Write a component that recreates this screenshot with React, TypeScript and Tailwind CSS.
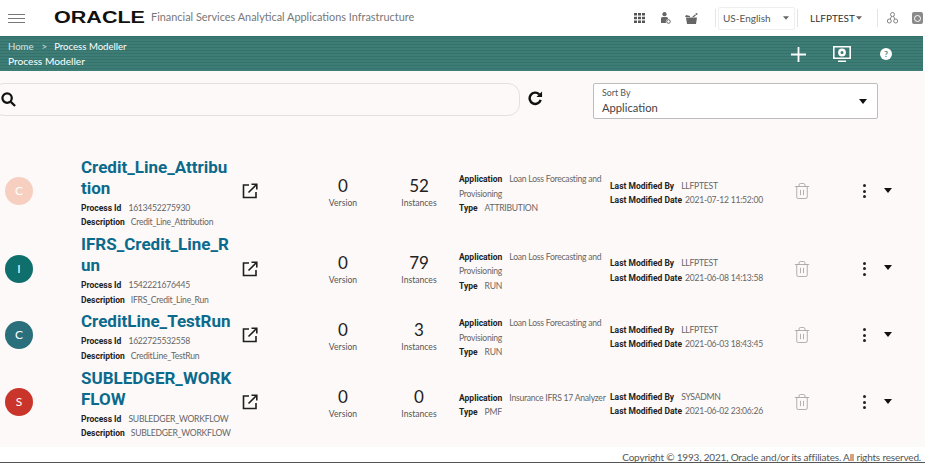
import React from "react";
import { Trash2 } from "lucide-react";

const Caret = ({ className }: { className: string }) => (
  <svg viewBox="0 0 10 6" className={className}>
    <path d="M0 0h10L5 6z" fill="currentColor" />
  </svg>
);

const OpenIcon = () => (
  <svg viewBox="0 0 16 16" className="w-[16px] h-[16px] text-[#1f1f1f]" fill="none" stroke="currentColor" strokeWidth="1.6">
    <path d="M7 2H1.5v12.5H14V9" />
    <path d="M6.5 9.5 14.5 1.5M9.5 1.2h5.3v5.3" />
  </svg>
);

const rows = [
  { letter: "C", color: "bg-[#f7cfc0]", title: "Credit_Line_Attribution", id: "1613452275930", desc: "Credit_Line_Attribution", version: 0, instances: 52, app: "Loan Loss Forecasting and Provisioning", type: "ATTRIBUTION", by: "LLFPTEST", date: "2021-07-12 11:52:00", h: "h-[78px]" },
  { letter: "I", color: "bg-[#0f6f6c]", title: "IFRS_Credit_Line_Run", id: "1542221676445", desc: "IFRS_Credit_Line_Run", version: 0, instances: 79, app: "Loan Loss Forecasting and Provisioning", type: "RUN", by: "LLFPTEST", date: "2021-06-08 14:13:58", h: "h-[77px]" },
  { letter: "C", color: "bg-[#2a6f7c]", title: "CreditLine_TestRun", id: "1622725532558", desc: "CreditLine_TestRun", version: 0, instances: 3, app: "Loan Loss Forecasting and Provisioning", type: "RUN", by: "LLFPTEST", date: "2021-06-03 18:43:45", h: "h-[56px]" },
  { letter: "S", color: "bg-[#c9352a]", title: "SUBLEDGER_WORKFLOW", id: "SUBLEDGER_WORKFLOW", desc: "SUBLEDGER_WORKFLOW", version: 0, instances: 0, app: "Insurance IFRS 17 Analyzer", type: "PMF", by: "SYSADMN", date: "2021-06-02 23:06:26", h: "h-[78px]" },
];

const Label = ({ children, gap }: { children: React.ReactNode; gap: string }) => (
  <b className={`font-['Roboto',sans-serif] tracking-normal text-[8.5px] text-[#222] ${gap}`}>{children}</b>
);

const Row = ({ r }: { r: (typeof rows)[number] }) => (
  <div className={`flex items-center ${r.h}`}>
    <div className={`ml-[5px] mb-[4px] w-[28px] h-[28px] rounded-full ${r.color} text-white text-[12px] flex items-center justify-center shrink-0`}>
      {r.letter}
    </div>
    <div className="ml-[48px] w-[151px] shrink-0">
      <div className="font-['Roboto',sans-serif] text-[17px] leading-[21px] font-bold text-[#0b6a8c] break-all">{r.title}</div>
      <div className="mt-[2px] text-[8.6px] tracking-[-0.25px] leading-[14.4px] text-[#666] whitespace-nowrap">
        <div><Label gap="mr-[7px]">Process Id</Label>{r.id}</div>
        <div><Label gap="mr-[6px]">Description</Label>{r.desc}</div>
      </div>
    </div>
    <div className="ml-[10px] mb-[4px] w-[16px] shrink-0"><OpenIcon /></div>
    <div className="ml-[50px] w-[70px] shrink-0 text-center">
      <div className="text-[17px] leading-[20px] text-[#222]">{r.version}</div>
      <div className="text-[8.6px] leading-[15px] text-[#555]">Version</div>
    </div>
    <div className="ml-[6px] w-[70px] shrink-0 text-center">
      <div className="text-[17px] leading-[20px] text-[#222]">{r.instances}</div>
      <div className="text-[8.6px] leading-[15px] text-[#555]">Instances</div>
    </div>
    <div className="ml-[5px] mt-[2px] w-[151px] shrink-0 text-[8.6px] tracking-[-0.25px] leading-[14.4px] text-[#666]">
      <div><Label gap="mr-[7px]">Application</Label>{r.app}</div>
      <div><Label gap="mr-[7px]">Type</Label>{r.type}</div>
    </div>
    <div className="w-[183px] shrink-0 text-[8.6px] tracking-[-0.25px] leading-[14.4px] text-[#666]">
      <div><Label gap="mr-[7px]">Last Modified By</Label>{r.by}</div>
      <div><Label gap="mr-[3px]">Last Modified Date</Label>{r.date}</div>
    </div>
    <Trash2 className="w-[18px] h-[18px] mb-[4px] text-[#a0a0a0] shrink-0" strokeWidth={1.1} />
    <div className="ml-[52px] mb-[4px] flex flex-col gap-[2.5px] shrink-0">
      <span className="w-[3px] h-[3px] rounded-full bg-[#222]" />
      <span className="w-[3px] h-[3px] rounded-full bg-[#222]" />
      <span className="w-[3px] h-[3px] rounded-full bg-[#222]" />
    </div>
    <Caret className="ml-[18px] mb-[6px] w-[8px] h-[5px] text-[#111] shrink-0" />
  </div>
);

export default function App() {
  return (
    <div className="w-[925px] h-[463px] overflow-hidden bg-white flex flex-col font-['Lato',sans-serif]">
      {/* top bar */}
      <div className="h-[36px] flex items-center shrink-0">
        <div className="ml-[8px] w-[17px] flex flex-col gap-[3px]">
          <span className="h-[1px] bg-[#777]" />
          <span className="h-[1px] bg-[#777]" />
          <span className="h-[1px] bg-[#777]" />
        </div>
        <svg viewBox="0 0 92 16" className="ml-[29px] mb-[3px] w-[92px] h-[16px] shrink-0">
          <text x="0" y="13.5" textLength="91" lengthAdjust="spacingAndGlyphs" fontFamily="Liberation Sans, sans-serif" fontWeight="700" fontSize="16" fill="#111">ORACLE</text>
        </svg>
        <span className="ml-[5px] mb-[1px] w-[268px] text-[10.9px] text-[#777] whitespace-nowrap">Financial Services Analytical Applications Infrastructure</span>
        <svg viewBox="0 0 11 10" className="ml-[215px] mb-[1px] w-[11px] h-[10px] text-[#555] shrink-0" fill="currentColor">
          <path d="M0 0h3v2.5H0zM4 0h3v2.5H4zM8 0h3v2.5H8zM0 3.7h3v2.5H0zM4 3.7h3v2.5H4zM8 3.7h3v2.5H8zM0 7.4h3V10H0zM4 7.4h3V10H4zM8 7.4h3V10H8z" />
        </svg>
        <svg viewBox="0 0 11 12" className="ml-[15px] w-[11px] h-[12px] text-[#666] shrink-0" fill="currentColor">
          <circle cx="4.5" cy="2.2" r="2.1" />
          <path d="M1 11V6.5C1 5.3 2 5 4.5 5S8 5.3 8 6.5V7a3 3 0 0 0-2 4z" />
          <circle cx="8.5" cy="9.5" r="1.8" fill="none" stroke="currentColor" />
        </svg>
        <svg viewBox="0 0 13 11" className="ml-[14px] w-[13px] h-[11px] text-[#666] shrink-0" fill="currentColor">
          <path d="M1 4.5h11L11 11H2zM0 4h5v-1L1 2zM7 4l3-2.5 1 .8L9 4z" />
          <circle cx="11.5" cy="1" r="1" />
        </svg>
        <span className="ml-[17px] w-[1px] h-[18px] bg-[#e4e4e4] shrink-0" />
        <div className="ml-[2px] w-[77px] h-[23px] border border-[#f0eeee] rounded-[2px] flex items-center pl-[4px] shrink-0">
          <span className="text-[10px] text-[#555] whitespace-nowrap">US-English</span>
          <Caret className="ml-auto mr-[5px] w-[6px] h-[4px] text-[#666]" />
        </div>
        <span className="ml-[2px] w-[1px] h-[18px] bg-[#e4e4e4] shrink-0" />
        <span className="ml-[12px] w-[40px] text-[10px] text-[#333] whitespace-nowrap">LLFPTEST</span>
        <Caret className="ml-[6px] w-[6px] h-[4px] text-[#666] shrink-0" />
        <span className="ml-[15px] w-[1px] h-[18px] bg-[#e4e4e4] shrink-0" />
        <svg viewBox="0 0 11 12" className="ml-[9px] w-[11px] h-[12px] text-[#777] shrink-0" fill="none" stroke="currentColor" strokeWidth="0.9">
          <circle cx="5.5" cy="2.5" r="2" />
          <circle cx="2.3" cy="9" r="2" />
          <circle cx="8.7" cy="9" r="2" />
          <path d="M4.5 4.3 3.2 7.2M6.5 4.3l1.3 2.9" />
        </svg>
        <div className="ml-[14px] w-[11px] h-[12px] bg-[#8a8a8a] rounded-[2px] flex items-center justify-center shrink-0">
          <span className="w-[7px] h-[7px] rounded-full border border-white" />
        </div>
      </div>

      {/* teal band */}
      <div className="h-[35px] mr-[2px] shrink-0 flex items-center bg-[#3b7a74] bg-[repeating-linear-gradient(0deg,#3d7d76_0px,#3d7d76_2px,#35726c_2px,#35726c_3px)] border-t border-[#2f6d67]">
        <div className="ml-[8px] text-[9.6px] leading-[14px] text-white">
          <div className="flex items-center">
            <span className="text-[#d5e4e2]">Home</span>
            <span className="ml-[8px] mr-[7px] text-[#d5e4e2]">&gt;</span>
            <span>Process Modeller</span>
          </div>
          <div className="text-[10.2px]">Process Modeller</div>
        </div>
        <svg viewBox="0 0 15 15" className="ml-auto w-[15px] h-[15px] text-white" fill="none" stroke="currentColor" strokeWidth="1.8">
          <path d="M7.5 0v15M0 7.5h15" />
        </svg>
        <svg viewBox="0 0 18 18" className="ml-[27px] w-[18px] h-[18px] text-white" fill="currentColor">
          <path fillRule="evenodd" d="M0 1h18v13H0zM1.6 2.6v9.8h14.8V2.6z" />
          <path d="M5 15.5h8V17H5z" />
          <path fillRule="evenodd" d="M9 3.6a3.9 3.9 0 1 1 0 7.8 3.9 3.9 0 0 1 0-7.8zM9 6a1.5 1.5 0 1 0 0 3 1.5 1.5 0 0 0 0-3z" />
        </svg>
        <div className="ml-[29px] mr-[31px] w-[12px] h-[12px] rounded-full bg-white text-[#3b7a74] text-[8px] font-bold flex items-center justify-center">?</div>
      </div>

      {/* content */}
      <div className="h-[376px] bg-[#fdf9f8] shrink-0">
        <div className="h-[48px] flex items-start">
          <div className="mt-[12px] ml-[-8px] w-[528px] h-[33px] border border-[#e4e0de] rounded-[12px] flex items-center pl-[8px]">
            <svg viewBox="0 0 16 16" className="w-[15px] h-[15px] text-[#111]" fill="none" stroke="currentColor" strokeWidth="2.4">
              <circle cx="6.5" cy="6.5" r="5" />
              <path d="m10.5 10.5 4.5 4.5" />
            </svg>
          </div>
          <svg viewBox="0 0 16 16" className="mt-[20px] ml-[8px] w-[15px] h-[15px] text-[#111]" fill="none" stroke="currentColor" strokeWidth="2.6">
            <path d="M13.5 9.5A6 6 0 1 1 12 3.5" />
            <path d="M15 0.5v6H9z" fill="currentColor" stroke="none" />
          </svg>
          <div className="mt-[12px] ml-[50px] w-[285px] h-[36px] bg-white border border-[#bdbdbd] rounded-[2px] flex items-center pl-[8px] pr-[10px]">
            <div>
              <div className="text-[8.8px] leading-[13px] text-[#555]">Sort By</div>
              <div className="mt-[1px] text-[11.2px] leading-[16px] text-[#444]">Application</div>
            </div>
            <Caret className="ml-auto w-[8px] h-[5px] text-[#111]" />
          </div>
        </div>
        <div className="pt-[35px]">
          {rows.map((r) => (
            <Row key={r.title} r={r} />
          ))}
        </div>
      </div>

      {/* footer */}
      <div className="h-[15px] shrink-0 text-right pr-[4px] text-[10px] tracking-[-0.18px] leading-[21px] text-[#555] whitespace-nowrap">
        Copyright © 1993, 2021, Oracle and/or its affiliates. All rights reserved.
      </div>
      <div className="h-[1px] bg-[#555] shrink-0" />
    </div>
  );
}
